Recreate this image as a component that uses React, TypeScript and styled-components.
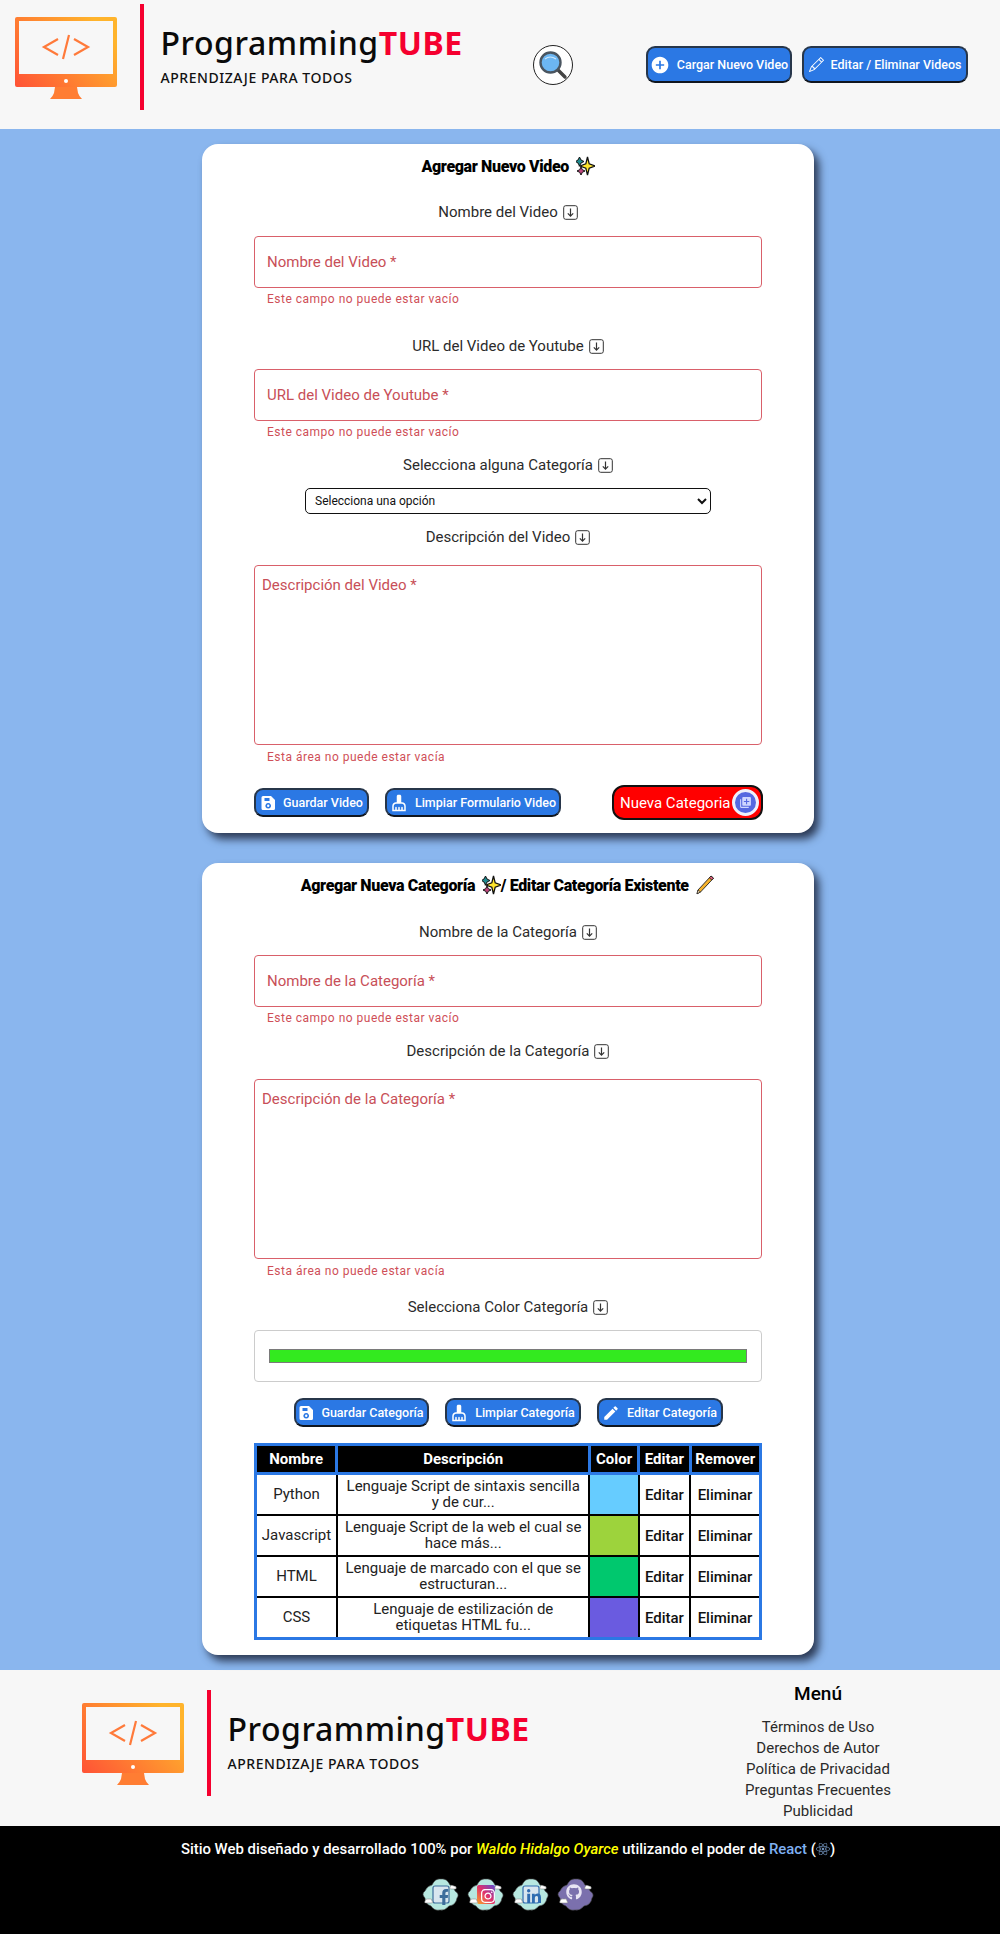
import React from "react";
import styled, { createGlobalStyle } from "styled-components";
import { MdAddCircle, MdCleaningServices, MdEdit, MdLibraryAdd } from "react-icons/md";
import { BsPencil } from "react-icons/bs";
import { FaFacebookF, FaInstagram, FaLinkedinIn, FaGithub, FaReact } from "react-icons/fa";

const GlobalStyle = createGlobalStyle`
    body {
        margin: 0;
        font-family: Roboto, "Liberation Sans", sans-serif;
        background: #8ab6ee;
    }
`;

const MonitorLogo = () => (
    <LogoIcon width="102" height="82" viewBox="0 0 102 82">
        <defs>
            <linearGradient id="logoGrad" x1="0" y1="1" x2="1" y2="0.4">
                <stop offset="0" stopColor="#ff5236" />
                <stop offset="1" stopColor="#ffb42c" />
            </linearGradient>
        </defs>
        <path d="M40 70 H62 L63 76 Q64 79 67 82 H35 Q38 79 39 76 Z" fill="#ff7d33" />
        <path
            fillRule="evenodd"
            fill="url(#logoGrad)"
            d="M2 0 H100 Q102 0 102 2 V68 Q102 70 100 70 H2 Q0 70 0 68 V2 Q0 0 2 0 Z M4 4 V57 H98 V4 Z"
        />
        <circle cx="51" cy="64" r="2" fill="#fff" />
        <g fill="none" stroke="#ff7a3a" strokeWidth="2.2">
            <polyline points="43,22 29,30 43,38" />
            <line x1="54" y1="18" x2="48" y2="42" />
            <polyline points="59,22 73,30 59,38" />
        </g>
    </LogoIcon>
);

const Logo = () => (
    <LogoWrap>
        <MonitorLogo />
        <LogoBar />
        <LogoText>
            <LogoTitle>Programming<span>TUBE</span></LogoTitle>
            <LogoSub>APRENDIZAJE PARA TODOS</LogoSub>
        </LogoText>
    </LogoWrap>
);

const DownKey = () => (
    <KeyIcon width="15" height="15" viewBox="0 0 15 15">
        <rect x="0.7" y="0.7" width="13.6" height="13.6" rx="2" fill="#fff" stroke="#333" strokeWidth="1" />
        <path d="M7.5 3.5 V11 M4.8 8.4 L7.5 11.2 L10.2 8.4" fill="none" stroke="#333" strokeWidth="1.2" />
    </KeyIcon>
);

const Sparkles = () => (
    <InlineEmoji width="19" height="20" viewBox="0 0 19 20">
        <path d="M3.5 1 L5 4 L8 5.5 L5 7 L3.5 10 L2 7 L-0.5 5.5 L2 4 Z" fill="#1f8a8f" stroke="#111" strokeWidth="1" />
        <path d="M5 11 L6.3 13.7 L9 15 L6.3 16.3 L5 19 L3.7 16.3 L1 15 L3.7 13.7 Z" fill="#c2477f" stroke="#111" strokeWidth="1" />
        <path d="M11.5 1 L13.2 7.8 L19 10 L13.2 12.2 L11.5 19 L9.8 12.2 L4 10 L9.8 7.8 Z" fill="#ffe62e" stroke="#111" strokeWidth="1.3" />
    </InlineEmoji>
);

const PencilEmoji = () => (
    <InlineEmoji width="20" height="20" viewBox="0 0 20 20">
        <path d="M16 1 L18.5 3.2 L5.5 17 L2 18.8 L3 15 Z" fill="#f7b32b" stroke="#222" strokeWidth="0.9" />
        <path d="M16 1 L18.5 3.2 L16.8 5 L14.3 2.8 Z" fill="#e0607e" stroke="#222" strokeWidth="0.9" />
        <path d="M3 15 L2 18.8 L5.5 17 Z" fill="#f3d9b0" stroke="#222" strokeWidth="0.7" />
    </InlineEmoji>
);

const SearchGlass = () => (
    <svg width="30" height="30" viewBox="0 0 30 30">
        <line x1="18.5" y1="18.5" x2="27" y2="27" stroke="#444" strokeWidth="3.4" strokeLinecap="round" />
        <circle cx="12.5" cy="12.5" r="10" fill="#6cb6f2" stroke="#4a5560" strokeWidth="2.4" />
        <path d="M7 9 Q12 5 18 9" fill="none" stroke="#cfe8fb" strokeWidth="1.2" />
    </svg>
);

const SaveIcon = () => (
    <svg width="16" height="16" viewBox="0 0 16 16">
        <path
            fillRule="evenodd"
            fill="#fff"
            d="M3 1 H11 L15 5 V13.5 Q15 15 13.5 15 H3 Q1.5 15 1.5 13.5 V2.5 Q1.5 1 3 1 Z M4.5 3 V6 H9.5 V3 Z M8.2 8 A2.8 2.8 0 1 0 8.21 8 Z"
        />
        <circle cx="8.2" cy="10.8" r="1.2" fill="#fff" />
    </svg>
);

const CloudIcon = ({ fill, children }: { fill: string; children: React.ReactNode }) => (
    <svg width="38" height="33" viewBox="0 0 38 33">
        <path
            d="M10 7 Q13 0 19 1 Q25 0 28 7 Q32 8 33 13 Q38 16 35 20 Q34 27 27 28 Q23 33 18 32 Q12 33 9 28 Q3 26 3 20 Q-1 16 3 13 Q5 8 10 7 Z"
            fill={fill}
            stroke="#444"
            strokeWidth="0.6"
        />
        {children}
        <path d="M3 23 Q4 20 7 21 Q10 20 10 23 Q12 25 9 25 H4 Q2 25 3 23 Z" fill="#fff" stroke="#777" strokeWidth="0.5" />
        <path d="M28 9 Q29 6 32 8 Q35 8 34 11 H29 Q27 11 28 9 Z" fill="#fff" stroke="#777" strokeWidth="0.5" />
    </svg>
);

const Field = ({ placeholder, helper }: { placeholder: string; helper: string }) => (
    <>
        <TextInput placeholder={placeholder} readOnly />
        <Helper>{helper}</Helper>
    </>
);

const AreaField = ({ placeholder, helper }: { placeholder: string; helper: string }) => (
    <>
        <TextArea placeholder={placeholder} readOnly />
        <Helper $top={5}>{helper}</Helper>
    </>
);

const languages = [
    { name: "Python", text: "Lenguaje Script de sintaxis sencilla y de cur...", color: "#66ccff" },
    { name: "Javascript", text: "Lenguaje Script de la web el cual se hace más...", color: "#9dd33c" },
    { name: "HTML", text: "Lenguaje de marcado con el que se estructuran...", color: "#00c86e" },
    { name: "CSS", text: "Lenguaje de estilización de etiquetas HTML fu...", color: "#6a5be0" },
];

const menuLinks = ["Términos de Uso", "Derechos de Autor", "Política de Privacidad", "Preguntas Frecuentes", "Publicidad"];

export default function App() {
    return (
        <>
            <GlobalStyle />
            <Header>
                <HeaderLogo><Logo /></HeaderLogo>
                <SearchButton><SearchGlass /></SearchButton>
                <HeaderActions>
                    <BlueButton $width={146} $height={37}><MdAddCircle size={20} /> Cargar Nuevo Video</BlueButton>
                    <BlueButton $width={166} $height={37}><BsPencil size={15} /> Editar / Eliminar Videos</BlueButton>
                </HeaderActions>
            </Header>

            <Main>
                <Card>
                    <CardTitle>Agregar Nuevo Video <Sparkles /></CardTitle>
                    <FieldLabel $top={23} $bottom={14}>Nombre del Video <DownKey /></FieldLabel>
                    <Field placeholder="Nombre del Video *" helper="Este campo no puede estar vacío" />
                    <FieldLabel $top={30}>URL del Video de Youtube <DownKey /></FieldLabel>
                    <Field placeholder="URL del Video de Youtube *" helper="Este campo no puede estar vacío" />
                    <FieldLabel $top={16}>Selecciona alguna Categoría <DownKey /></FieldLabel>
                    <SelectBox>
                        <option>Selecciona una opción</option>
                    </SelectBox>
                    <FieldLabel $top={13} $bottom={18}>Descripción del Video <DownKey /></FieldLabel>
                    <AreaField placeholder="Descripción del Video *" helper="Esta área no puede estar vacía" />
                    <ActionRow>
                        <BlueButton $width={115} $height={29}><SaveIcon /> Guardar Video</BlueButton>
                        <BlueButton $width={176} $height={29}><MdCleaningServices size={18} /> Limpiar Formulario Video</BlueButton>
                        <RedButton>
                            Nueva Categoria
                            <RedBadge><MdLibraryAdd size={13} /></RedBadge>
                        </RedButton>
                    </ActionRow>
                </Card>

                <Card>
                    <CardTitle>Agregar Nueva Categoría <Sparkles />/ Editar Categoría Existente <PencilEmoji /></CardTitle>
                    <FieldLabel $top={24}>Nombre de la Categoría <DownKey /></FieldLabel>
                    <Field placeholder="Nombre de la Categoría *" helper="Este campo no puede estar vacío" />
                    <FieldLabel $top={16} $bottom={18}>Descripción de la Categoría <DownKey /></FieldLabel>
                    <AreaField placeholder="Descripción de la Categoría *" helper="Esta área no puede estar vacía" />
                    <FieldLabel $top={19}>Selecciona Color Categoría <DownKey /></FieldLabel>
                    <ColorBox><ColorBar /></ColorBox>
                    <CenterRow>
                        <BlueButton $width={135} $height={29}><SaveIcon /> Guardar Categoría</BlueButton>
                        <BlueButton $width={136} $height={29}><MdCleaningServices size={18} /> Limpiar Categoría</BlueButton>
                        <BlueButton $width={126} $height={29}><MdEdit size={18} /> Editar Categoría</BlueButton>
                    </CenterRow>
                    <LangTable>
                        <colgroup>
                            <col width="81" />
                            <col width="251" />
                            <col width="49" />
                            <col width="51" />
                            <col width="70" />
                        </colgroup>
                        <thead>
                            <tr>
                                <HeadCell>Nombre</HeadCell>
                                <HeadCell>Descripción</HeadCell>
                                <HeadCell>Color</HeadCell>
                                <HeadCell>Editar</HeadCell>
                                <HeadCell>Remover</HeadCell>
                            </tr>
                        </thead>
                        <tbody>
                            {languages.map((lang) => (
                                <tr key={lang.name}>
                                    <BodyCell>{lang.name}</BodyCell>
                                    <DescCell>{lang.text}</DescCell>
                                    <SwatchCell $color={lang.color} />
                                    <ActionCell>Editar</ActionCell>
                                    <ActionCell>Eliminar</ActionCell>
                                </tr>
                            ))}
                        </tbody>
                    </LangTable>
                </Card>
            </Main>

            <Footer>
                <FooterLogo><Logo /></FooterLogo>
                <FooterMenu>
                    <MenuTitle>Menú</MenuTitle>
                    {menuLinks.map((link) => <MenuLink key={link}>{link}</MenuLink>)}
                </FooterMenu>
            </Footer>

            <Credits>
                <CreditLine>
                    Sitio Web diseñado y desarrollado 100% por <Author>Waldo Hidalgo Oyarce</Author> utilizando el poder de <ReactWord>React</ReactWord> (<ReactGlyph><FaReact size={14} /></ReactGlyph>)
                </CreditLine>
                <SocialRow>
                    <CloudIcon fill="#b7e8e0">
                        <rect x="11" y="8" width="16" height="17" rx="2" fill="#d8e6ef" stroke="#3d6d9c" strokeWidth="1.2" />
                        <FaFacebookF x="14" y="11" width="10" height="11" color="#3d6d9c" />
                    </CloudIcon>
                    <CloudIcon fill="#b7e8e0">
                        <defs>
                            <linearGradient id="instaGrad" x1="0" y1="1" x2="1" y2="0">
                                <stop offset="0" stopColor="#f9a825" />
                                <stop offset="0.5" stopColor="#e1306c" />
                                <stop offset="1" stopColor="#5b4fd0" />
                            </linearGradient>
                        </defs>
                        <rect x="10" y="7" width="18" height="19" rx="2" fill="url(#instaGrad)" />
                        <FaInstagram x="13" y="10" width="12" height="13" color="#fff" />
                    </CloudIcon>
                    <CloudIcon fill="#b7e8e0">
                        <rect x="11" y="8" width="16" height="17" rx="2" fill="#d8e6ef" stroke="#2f6cb0" strokeWidth="1.2" />
                        <FaLinkedinIn x="14" y="11" width="10" height="11" color="#2f6cb0" />
                    </CloudIcon>
                    <CloudIcon fill="#7b70ad">
                        <FaGithub x="9" y="6" width="20" height="21" color="#e8e4f4" />
                    </CloudIcon>
                </SocialRow>
            </Credits>
        </>
    );
}

const Header = styled.header`
    display: flex;
    align-items: center;
    height: 129px;
    box-sizing: border-box;
    padding: 0 32px 0 15px;
    background: #f7f7f7;
`;
const HeaderLogo = styled.div`
    margin-bottom: 15px;
`;
const LogoWrap = styled.div`
    display: flex;
    align-items: center;
    width: 445px;
    height: 106px;
`;
const LogoIcon = styled.svg`
    flex-shrink: 0;
    margin-top: 1px;
`;
const LogoBar = styled.div`
    flex-shrink: 0;
    width: 3.5px;
    height: 106px;
    margin: 0 17px 0 23px;
    background: #f5002f;
`;
const LogoText = styled.div`
    display: flex;
    flex-direction: column;
    margin-top: -4px;
`;
const LogoTitle = styled.div`
    font-family: "Noto Sans", sans-serif;
    font-size: 32px;
    line-height: 40px;
    font-weight: 500;
    letter-spacing: 0.55px;
    color: #0a0a0a;
    white-space: nowrap;
    span {
        color: #f5002f;
        font-weight: 700;
    }
`;
const LogoSub = styled.div`
    font-family: "Noto Sans", sans-serif;
    font-size: 14px;
    line-height: 18px;
    margin-top: 6px;
    font-weight: 500;
    letter-spacing: 0.55px;
    color: #111;
    white-space: nowrap;
`;
const SearchButton = styled.div`
    display: flex;
    align-items: center;
    justify-content: center;
    width: 40px;
    height: 40px;
    margin-left: 73px;
    box-sizing: border-box;
    border: 1px solid #222;
    border-radius: 50%;
    background: #fff;
`;
const HeaderActions = styled.div`
    display: flex;
    gap: 10px;
    margin-left: auto;
`;
const BlueButton = styled.div<{ $width: number; $height: number }>`
    display: flex;
    align-items: center;
    justify-content: center;
    gap: 7px;
    width: ${(p) => p.$width}px;
    height: ${(p) => p.$height}px;
    box-sizing: border-box;
    border: 2px solid #27364a;
    border-bottom-color: #10161f;
    border-radius: 9px;
    background: #2b78e4;
    color: #fff;
    font-size: 12.5px;
    font-weight: 500;
    white-space: nowrap;
`;
const RedButton = styled.div`
    display: flex;
    align-items: center;
    width: 151px;
    height: 35px;
    margin-left: auto;
    margin-right: -1px;
    padding-left: 6px;
    box-sizing: border-box;
    border: 2px solid #111;
    border-radius: 12px;
    background: #ff0000;
    color: #fff;
    font-size: 15px;
    white-space: nowrap;
`;
const RedBadge = styled.span`
    display: flex;
    align-items: center;
    justify-content: center;
    width: 27px;
    height: 27px;
    margin-left: 1px;
    flex-shrink: 0;
    box-sizing: border-box;
    border: 3px solid #eef0fb;
    border-radius: 50%;
    background: #5568e0;
    color: #cfd6ff;
`;
const Main = styled.main`
    display: flex;
    flex-direction: column;
    align-items: center;
    gap: 30px;
    padding: 15px 0 15px 16px;
`;
const Card = styled.section`
    width: 612px;
    box-sizing: border-box;
    padding: 11px 52px 13px;
    border-radius: 16px;
    background: #fff;
    box-shadow: 5px 6px 8px #2c3a55;
    display: flex;
    flex-direction: column;
`;
const CardTitle = styled.h2`
    margin: 0;
    height: 24px;
    line-height: 24px;
    text-align: center;
    font-size: 16px;
    font-weight: 900;
    letter-spacing: -0.35px;
    color: #000;
    white-space: pre;
`;
const FieldLabel = styled.div<{ $top: number; $bottom?: number }>`
    display: flex;
    align-items: center;
    justify-content: center;
    gap: 5px;
    height: 20px;
    margin-top: ${(p) => p.$top}px;
    margin-bottom: ${(p) => p.$bottom ?? 13}px;
    font-size: 15px;
    color: #2b2b2b;
`;
const KeyIcon = styled.svg`
    flex-shrink: 0;
`;
const InlineEmoji = styled.svg`
    vertical-align: -4px;
    margin-left: 3px;
`;
const TextInput = styled.input`
    display: block;
    width: 100%;
    height: 52px;
    box-sizing: border-box;
    padding: 0 12px;
    border: 1px solid #d9606a;
    border-radius: 4px;
    outline: none;
    font-family: Roboto, sans-serif;
    font-size: 15px;
    &::placeholder {
        color: #c84f58;
        opacity: 1;
    }
`;
const TextArea = styled.textarea`
    display: block;
    width: 100%;
    height: 180px;
    box-sizing: border-box;
    padding: 10px 7px;
    border: 1px solid #d9606a;
    border-radius: 4px;
    outline: none;
    resize: none;
    font-family: Roboto, sans-serif;
    font-size: 15px;
    &::placeholder {
        color: #c84f58;
        opacity: 1;
    }
`;
const Helper = styled.div<{ $top?: number }>`
    margin-top: ${(p) => p.$top ?? 4}px;
    padding-left: 13px;
    font-size: 12px;
    line-height: 14px;
    letter-spacing: 0.5px;
    color: #cf4f58;
`;
const SelectBox = styled.select`
    display: block;
    width: 406px;
    height: 26px;
    margin: 0 auto;
    padding: 0 5px;
    border: 1px solid #111;
    border-radius: 5px;
    background: #fff;
    font-family: Roboto, sans-serif;
    font-size: 12px;
    color: #111;
`;
const ActionRow = styled.div`
    display: flex;
    align-items: center;
    gap: 16px;
    margin-top: 21px;
`;
const CenterRow = styled.div`
    display: flex;
    justify-content: center;
    gap: 16px;
    margin-top: 16px;
`;
const ColorBox = styled.div`
    display: flex;
    align-items: center;
    height: 52px;
    box-sizing: border-box;
    padding: 0 14px;
    border: 1px solid #ccc;
    border-radius: 4px;
`;
const ColorBar = styled.div`
    width: 100%;
    height: 14px;
    box-sizing: border-box;
    border: 1px solid #7a7a7a;
    background: #33ea1f;
`;
const LangTable = styled.table`
    width: 508px;
    margin: 16px 0 2px;
    box-sizing: border-box;
    table-layout: fixed;
    border-collapse: collapse;
    border: 3px solid #2b78e4;
`;
const HeadCell = styled.th`
    height: 26px;
    padding: 0;
    border: 3px solid #2b78e4;
    background: #000;
    color: #fff;
    font-size: 15px;
    font-weight: 700;
`;
const BodyCell = styled.td`
    height: 39px;
    padding: 0 3px;
    border: 2px solid #000;
    text-align: center;
    font-size: 15px;
    line-height: 15.5px;
    color: #222;
`;
const DescCell = styled(BodyCell)`
    padding: 0 6px;
`;
const SwatchCell = styled.td<{ $color: string }>`
    border: 2px solid #000;
    background: ${(p) => p.$color};
`;
const ActionCell = styled.td`
    padding: 0;
    border: 2px solid #000;
    text-align: center;
    font-size: 15px;
    font-weight: 500;
    color: #111;
`;
const Footer = styled.footer`
    display: flex;
    align-items: flex-start;
    height: 156px;
    box-sizing: border-box;
    padding: 20px 0 0 82px;
    background: #f7f7f7;
`;
const FooterLogo = styled.div`
    flex-shrink: 0;
`;
const FooterMenu = styled.nav`
    display: flex;
    flex-direction: column;
    align-items: center;
    flex-shrink: 0;
    width: 200px;
    margin: -8px 0 0 191px;
`;
const MenuTitle = styled.div`
    margin-bottom: 11px;
    font-size: 19px;
    line-height: 24px;
    font-weight: 500;
    color: #000;
`;
const MenuLink = styled.div`
    font-size: 15px;
    line-height: 21px;
    color: #2a2a2a;
`;
const Credits = styled.div`
    display: flex;
    flex-direction: column;
    align-items: center;
    height: 108px;
    box-sizing: border-box;
    padding: 12px 0 0 16px;
    background: #000;
`;
const CreditLine = styled.div`
    display: flex;
    align-items: center;
    white-space: pre;
    font-size: 14.9px;
    line-height: 22px;
    font-weight: 500;
    color: #fff;
`;
const Author = styled.em`
    color: #ffff00;
`;
const ReactWord = styled.span`
    color: #7fb0f2;
`;
const ReactGlyph = styled.span`
    display: inline-flex;
    color: #6f8fb8;
`;
const SocialRow = styled.div`
    display: flex;
    gap: 7px;
    margin-top: 18px;
`;
